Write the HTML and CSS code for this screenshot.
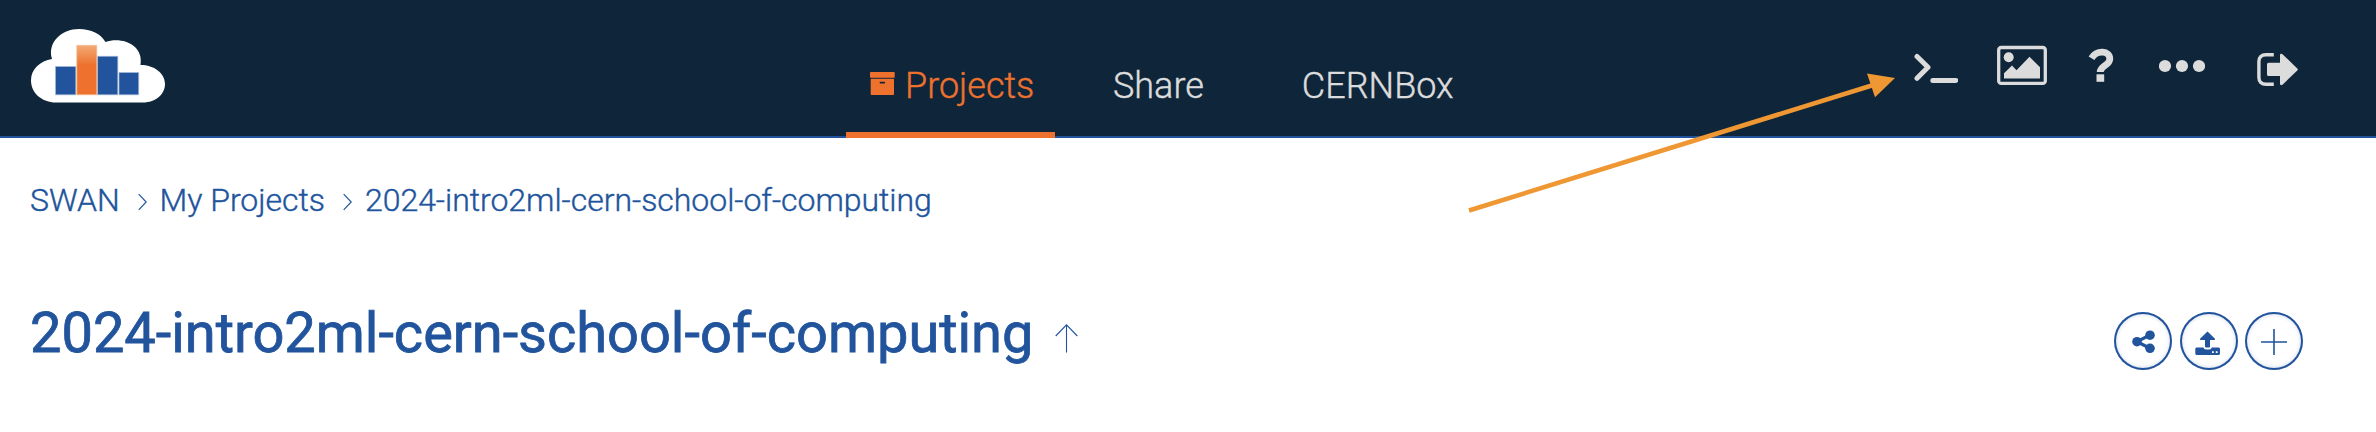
FILE: index.html
```html
<!DOCTYPE html>
<html lang="en">
<head>
<meta charset="utf-8">
<title>SWAN</title>
<link rel="stylesheet" href="styles.css">
</head>
<body>
<header class="topbar">
  <a class="logo">
    <svg width="134" height="74" viewBox="31 29 134 74">
      <defs><linearGradient id="bar" x1="0" y1="0" x2="0" y2="1"><stop offset="0" stop-color="#f3aa75"/><stop offset=".4" stop-color="#ee722e"/></linearGradient></defs>
      <path fill="#fff" d="M52 59C47 42 62 29 79 29C91 29 101 34 105.500 42C121 36.500 144 44 140.500 65C154 65 165 73 165 84C165 94 156 102.500 143 102.500H56C42 102.500 31 93 31 80.500C31 69 40 61 52 59Z"/>
      <path fill="#21549c" stroke="#a5b9d8" stroke-width=".7" d="M55.500 66.500h20.300v28.300H55.500zM97.500 56.300h20.300v38.500H97.500zM119 72.500h19.700v22.300H119z"/>
      <path fill="url(#bar)" stroke="#f6bd97" stroke-width=".7" d="M76.800 45.300h20v49.500h-20z"/>
    </svg>
  </a>
  <nav class="tabs">
    <a class="tab tab-active">
      <svg class="tab-icon" width="25" height="24" viewBox="0 0 25 24" fill="#ee722e"><rect width="24.700" height="5.700" rx=".8"/><path fill-rule="evenodd" d="M1.500 6.700h21.700c.5 0 .8.300.8.800v14.700c0 .500-.300.800-.8.800H1.500c-.5 0-.8-.3-.8-.8V7.500c0-.500.300-.8.800-.8zM10.300 9.700a1 1 0 0 0 0 1.900h4.100a1 1 0 0 0 0-1.900z"/></svg>
      <span>Projects</span>
    </a>
    <a class="tab">Share</a>
    <a class="tab">CERNBox</a>
  </nav>
  <div class="tools">
    <svg width="44" height="50" viewBox="1914 40 44 50" fill="none" stroke="#dcdcdc" stroke-width="5" stroke-linecap="round" stroke-linejoin="round"><path d="M1917 56.500L1928 67.300L1917 78.300M1932.800 80.400H1955.800"/></svg>
    <svg width="50" height="50" viewBox="1997 40 50 50" fill="#dcdcdc"><rect x="1998.700" y="47.500" width="46.600" height="35.900" rx="2.500" fill="none" stroke="#dcdcdc" stroke-width="3.300"/><circle cx="2008.700" cy="57.300" r="5"/><path d="M2004 78.600V73.300L2012 65.500L2016.500 70.300L2029.500 56.800L2040 67.300V78.600Z"/></svg>
    <svg width="26" height="50" viewBox="2088 40 26 50" fill="none"><path d="M2091.500 58.200C2097 49.500 2109.800 50.500 2109.800 59C2109.800 65.500 2100.200 65.500 2100.200 72" stroke="#dcdcdc" stroke-width="6.800"/><path fill="#dcdcdc" d="M2096.500 74.300h7.700v7.500h-7.700z"/></svg>
    <svg width="46" height="50" viewBox="2159 40 46 50" fill="#dcdcdc"><circle cx="2165" cy="66" r="6.100"/><circle cx="2182" cy="66" r="6.100"/><circle cx="2199" cy="66" r="6.100"/></svg>
    <svg width="42" height="50" viewBox="2257 40 42 50"><path fill="none" stroke="#dcdcdc" stroke-width="3.400" d="M2273.800 54.700H2266C2261.500 54.700 2258.900 57.300 2258.900 61.500V77.500C2258.900 81.700 2261.500 84.300 2266 84.300H2273.800"/><path fill="#dcdcdc" d="M2268.500 62.700H2280V55C2280 53.600 2281.500 53.300 2282.500 54.200L2297.300 68.500Q2298.300 69.500 2297.300 70.500L2282.500 84.700C2281.500 85.600 2280 85.200 2280 83.800V76H2268.500Q2267 76 2267 74.500V64.200Q2267 62.700 2268.500 62.700Z"/></svg>
  </div>
</header>
<main class="page">
  <div class="crumbs">
    <a>SWAN</a>
    <svg class="chevron" width="9" height="18" viewBox="0 0 9 18"><path d="M.7 1.200L8.200 9L.7 16.800"/></svg>
    <a>My Projects</a>
    <svg class="chevron" width="9" height="18" viewBox="0 0 9 18"><path d="M.7 1.200L8.200 9L.7 16.800"/></svg>
    <a>2024-intro2ml-cern-school-of-computing</a>
  </div>
  <div class="heading">
    <h1 class="title">2024-intro2ml-cern-school-of-computing</h1>
    <svg class="up" width="23" height="29" viewBox="0 0 23 29"><path d="M11.500 28.500V.8M.7 12L11.500 .8L22.300 12"/></svg>
    <div class="actions">
      <a class="round"><svg width="58" height="58" viewBox="2114 312 58 58" fill="#21549c"><path d="M2150 335L2137 341.700L2150 348.300" fill="none" stroke="#21549c" stroke-width="3.200"/><circle cx="2150" cy="335.200" r="4.800"/><circle cx="2137" cy="341.700" r="4.800"/><circle cx="2150" cy="348.300" r="4.800"/></svg></a>
      <a class="round"><svg width="58" height="58" viewBox="2180 312 58 58" fill="#21549c"><path d="M2207.500 331.500L2215 338.700Q2215.500 340 2214 340H2210V346.500Q2210 347.500 2209 347.500H2206Q2205 347.500 2205 346.500V340H2201Q2199.500 340 2200 338.700Z"/><path fill-rule="evenodd" d="M2196.500 347.500H2203.500Q2204 349.500 2206 349.500H2209.300Q2211.300 349.500 2211.800 347.500H2218.700Q2220 347.500 2220 349V353.600Q2220 355 2218.700 355H2196.500Q2195.300 355 2195.300 353.600V349Q2195.300 347.500 2196.500 347.500ZM2212 351.200v1.800h1.800v-1.800zM2215.800 351.200v1.800h1.800v-1.800z"/></svg></a>
      <a class="round"><svg width="58" height="58" viewBox="0 0 58 58" fill="none" stroke="#21549c" stroke-width="1.600"><path d="M29 17V43M16 30H42"/></svg></a>
    </div>
  </div>
</main>
<svg class="pointer" width="430" height="144" viewBox="1467 70 430 144"><path d="M1469 210.500L1875 84.500" stroke="#ef9733" stroke-width="4.600"/><path fill="#ef9733" d="M1895 78L1867 73.500L1875 97.300Z"/></svg>
</body>
</html>
```
FILE: styles.css
```css
* { box-sizing: border-box; }
body { margin: 0; height: 432px; background: #fff; color: #21549c; font-family: Roboto, "Liberation Sans", sans-serif; position: relative; overflow: hidden; }
svg { display: block; flex: none; }
.topbar { height: 138px; background: #0e253a; border-bottom: 2px solid #21549c; padding: 0 77px 0 31px; display: flex; align-items: flex-start; }
.logo { width: 134px; margin-top: 29px; flex: none; }
.tabs { display: flex; margin-left: 681px; height: 138px; }
.tab { height: 138px; display: flex; align-items: flex-start; padding: 65px 0 0; margin-right: 98px; font-size: 36px; line-height: 42px; font-weight: 300; color: #dcdcdc; white-space: nowrap; -webkit-text-stroke: .4px currentColor; }
.tab-active { width: 209px; margin-right: 58px; padding-left: 24px; gap: 10px; color: #ee722e; border-bottom: 6px solid #ee722e; }
.tab-icon { margin-top: 7px; }
.tools { margin: 40px 0 0 auto; display: flex; align-items: flex-start; }
.tools svg + svg { margin-left: 39px; }
.tools svg:nth-child(3) { margin-left: 41px; }
.tools svg:nth-child(4) { margin-left: 45px; }
.tools svg:nth-child(5) { margin-left: 52px; }
.page { padding: 43px 73px 0 30px; }
.crumbs { display: flex; align-items: flex-start; font-size: 32px; line-height: 38px; font-weight: 300; letter-spacing: -.03px; white-space: nowrap; -webkit-text-stroke: .4px currentColor; }
.chevron { margin: 12px 13px 0 18px; fill: none; stroke: #21549c; stroke-width: 1.200; }
.heading { display: flex; align-items: flex-start; margin-top: 81px; }
.title { margin: 0; font-size: 56px; line-height: 66px; font-weight: 400; letter-spacing: -.03px; white-space: nowrap; -webkit-text-stroke: .8px currentColor; }
.up { margin: 24px 0 0 22px; fill: none; stroke: #21549c; stroke-width: 1.100; }
.actions { display: flex; margin: 12px 0 0 auto; gap: 7px; }
.round { width: 58px; height: 58px; border-radius: 50%; box-shadow: inset 0 0 0 2px #21549c, inset 0 0 5px 1px #b5c2de; }
.round:first-child { margin-right: 1px; }
.pointer { position: absolute; left: 1467px; top: 70px; }
```
